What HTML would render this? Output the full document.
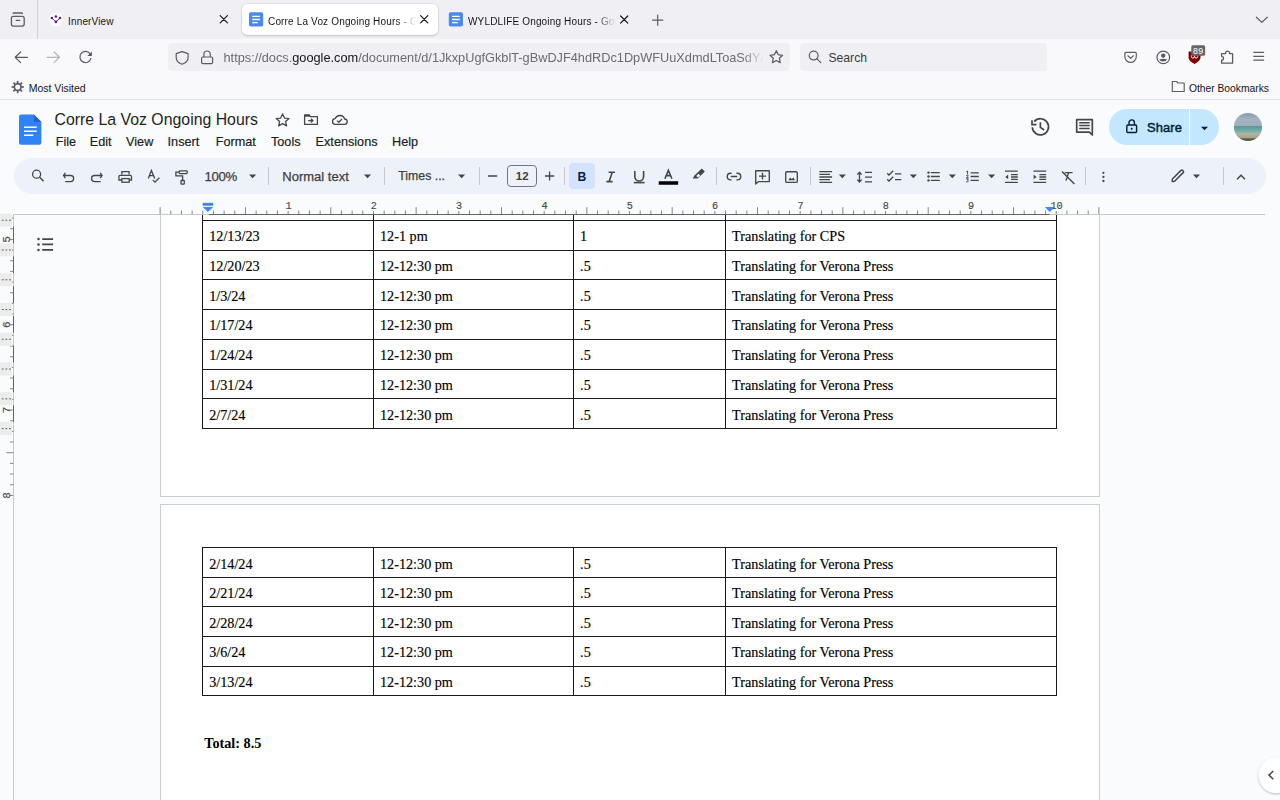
<!DOCTYPE html><html><head><meta charset="utf-8"><title>Corre La Voz Ongoing Hours</title><style>
*{box-sizing:border-box;margin:0;padding:0}
html,body{width:1280px;height:800px;overflow:hidden;background:#f9fbfd;font-family:"Liberation Sans",sans-serif;position:relative}
.a{position:absolute}
.t{position:absolute;white-space:nowrap;line-height:1}
svg{position:absolute;left:0;top:0;overflow:visible}
</style></head><body>
<div class="a" style="left:0.00px;top:0.00px;width:1280.00px;height:39.00px;background:#f0f0f4;"></div>
<div class="a" style="left:37.00px;top:0.00px;width:1.00px;height:39.00px;background:#d0d0d7;"></div>
<div class="a" style="left:242.00px;top:4.00px;width:196.00px;height:31.00px;background:#fff;border-radius:5px;box-shadow:0 0 0 .5px rgba(0,0,0,.10),0 1px 2px rgba(0,0,0,.16)"></div>
<div class="t" style="left:68.00px;top:16.54px;font-size:10.00px;color:#15141a;font-weight:normal;font-family:'Liberation Sans',sans-serif;letter-spacing:0.16px">InnerView</div>
<div class="t" style="left:268.00px;top:16.54px;font-size:10.00px;color:#15141a;font-weight:normal;font-family:'Liberation Sans',sans-serif;letter-spacing:0.16px;width:150px;overflow:hidden;-webkit-mask-image:linear-gradient(90deg,#000 128px,transparent 148px)">Corre La Voz Ongoing Hours - Google Docs</div>
<div class="t" style="left:468.00px;top:16.54px;font-size:10.00px;color:#15141a;font-weight:normal;font-family:'Liberation Sans',sans-serif;letter-spacing:0.16px;width:150px;overflow:hidden;-webkit-mask-image:linear-gradient(90deg,#000 128px,transparent 148px)">WYLDLIFE Ongoing Hours - Google Docs</div>
<div class="a" style="left:0.00px;top:39.00px;width:1280.00px;height:36.00px;background:#f9f9fb;"></div>
<div class="a" style="left:168.00px;top:43.00px;width:622.00px;height:28.00px;background:#f0f0f4;border-radius:4px"></div>
<div class="t" style="left:223.50px;top:52.21px;font-size:12.75px;color:#6a6a73;font-weight:normal;font-family:'Liberation Sans',sans-serif;width:540px;overflow:hidden;-webkit-mask-image:linear-gradient(90deg,#000 518px,transparent 540px)">https://docs.<span style="color:#15141a">google.com</span>/document/d/1JkxpUgfGkblT-gBwDJF4hdRDc1DpWFUuXdmdLToaSdY/edit</div>
<div class="a" style="left:800.00px;top:43.00px;width:247.00px;height:28.00px;background:#f0f0f4;border-radius:4px"></div>
<div class="t" style="left:828.40px;top:51.57px;font-size:12.20px;color:#3a3944;font-weight:normal;font-family:'Liberation Sans',sans-serif;">Search</div>
<div class="a" style="left:0.00px;top:75.00px;width:1280.00px;height:24.00px;background:#f9f9fb;"></div>
<div class="a" style="left:0.00px;top:99.00px;width:1280.00px;height:1.00px;background:#e0e0e6;"></div>
<div class="t" style="left:28.70px;top:83.11px;font-size:10.50px;color:#15141a;font-weight:normal;font-family:'Liberation Sans',sans-serif;">Most Visited</div>
<div class="t" style="left:1188.90px;top:83.68px;font-size:10.30px;color:#15141a;font-weight:normal;font-family:'Liberation Sans',sans-serif;">Other Bookmarks</div>
<div class="a" style="left:0;top:214px;width:1280px;height:586px;overflow:hidden;background:#f9fbfd">
<div class="a" style="left:160.00px;top:-114.00px;width:940.00px;height:396.70px;background:#fff;border:1px solid #cdcdcd"></div>
<div class="a" style="left:160.00px;top:290.00px;width:940.00px;height:400.00px;background:#fff;border:1px solid #cdcdcd"></div>
<div class="a" style="left:202.10px;top:5.90px;width:855.00px;height:1.00px;background:#1a1a1a;"></div>
<div class="a" style="left:202.10px;top:35.63px;width:855.00px;height:1.00px;background:#1a1a1a;"></div>
<div class="a" style="left:202.10px;top:65.36px;width:855.00px;height:1.00px;background:#1a1a1a;"></div>
<div class="a" style="left:202.10px;top:95.09px;width:855.00px;height:1.00px;background:#1a1a1a;"></div>
<div class="a" style="left:202.10px;top:124.82px;width:855.00px;height:1.00px;background:#1a1a1a;"></div>
<div class="a" style="left:202.10px;top:154.55px;width:855.00px;height:1.00px;background:#1a1a1a;"></div>
<div class="a" style="left:202.10px;top:184.28px;width:855.00px;height:1.00px;background:#1a1a1a;"></div>
<div class="a" style="left:202.10px;top:214.01px;width:855.00px;height:1.00px;background:#1a1a1a;"></div>
<div class="a" style="left:202.10px;top:-0.50px;width:1.00px;height:215.51px;background:#1a1a1a;"></div>
<div class="a" style="left:372.90px;top:-0.50px;width:1.00px;height:215.51px;background:#1a1a1a;"></div>
<div class="a" style="left:573.00px;top:-0.50px;width:1.00px;height:215.51px;background:#1a1a1a;"></div>
<div class="a" style="left:725.00px;top:-0.50px;width:1.00px;height:215.51px;background:#1a1a1a;"></div>
<div class="a" style="left:1056.10px;top:-0.50px;width:1.00px;height:215.51px;background:#1a1a1a;"></div>
<div class="t" style="left:209.20px;top:15.21px;font-size:14.20px;color:#000;font-weight:normal;font-family:'Liberation Serif',serif;-webkit-text-stroke:0.15px #000">12/13/23</div>
<div class="t" style="left:380.00px;top:15.21px;font-size:14.20px;color:#000;font-weight:normal;font-family:'Liberation Serif',serif;-webkit-text-stroke:0.15px #000">12-1 pm</div>
<div class="t" style="left:580.10px;top:15.21px;font-size:14.20px;color:#000;font-weight:normal;font-family:'Liberation Serif',serif;-webkit-text-stroke:0.15px #000">1</div>
<div class="t" style="left:732.10px;top:15.21px;font-size:14.20px;color:#000;font-weight:normal;font-family:'Liberation Serif',serif;-webkit-text-stroke:0.15px #000">Translating for CPS</div>
<div class="t" style="left:209.20px;top:44.94px;font-size:14.20px;color:#000;font-weight:normal;font-family:'Liberation Serif',serif;-webkit-text-stroke:0.15px #000">12/20/23</div>
<div class="t" style="left:380.00px;top:44.94px;font-size:14.20px;color:#000;font-weight:normal;font-family:'Liberation Serif',serif;-webkit-text-stroke:0.15px #000">12-12:30 pm</div>
<div class="t" style="left:580.10px;top:44.94px;font-size:14.20px;color:#000;font-weight:normal;font-family:'Liberation Serif',serif;-webkit-text-stroke:0.15px #000">.5</div>
<div class="t" style="left:732.10px;top:44.94px;font-size:14.20px;color:#000;font-weight:normal;font-family:'Liberation Serif',serif;-webkit-text-stroke:0.15px #000">Translating for Verona Press</div>
<div class="t" style="left:209.20px;top:74.67px;font-size:14.20px;color:#000;font-weight:normal;font-family:'Liberation Serif',serif;-webkit-text-stroke:0.15px #000">1/3/24</div>
<div class="t" style="left:380.00px;top:74.67px;font-size:14.20px;color:#000;font-weight:normal;font-family:'Liberation Serif',serif;-webkit-text-stroke:0.15px #000">12-12:30 pm</div>
<div class="t" style="left:580.10px;top:74.67px;font-size:14.20px;color:#000;font-weight:normal;font-family:'Liberation Serif',serif;-webkit-text-stroke:0.15px #000">.5</div>
<div class="t" style="left:732.10px;top:74.67px;font-size:14.20px;color:#000;font-weight:normal;font-family:'Liberation Serif',serif;-webkit-text-stroke:0.15px #000">Translating for Verona Press</div>
<div class="t" style="left:209.20px;top:104.40px;font-size:14.20px;color:#000;font-weight:normal;font-family:'Liberation Serif',serif;-webkit-text-stroke:0.15px #000">1/17/24</div>
<div class="t" style="left:380.00px;top:104.40px;font-size:14.20px;color:#000;font-weight:normal;font-family:'Liberation Serif',serif;-webkit-text-stroke:0.15px #000">12-12:30 pm</div>
<div class="t" style="left:580.10px;top:104.40px;font-size:14.20px;color:#000;font-weight:normal;font-family:'Liberation Serif',serif;-webkit-text-stroke:0.15px #000">.5</div>
<div class="t" style="left:732.10px;top:104.40px;font-size:14.20px;color:#000;font-weight:normal;font-family:'Liberation Serif',serif;-webkit-text-stroke:0.15px #000">Translating for Verona Press</div>
<div class="t" style="left:209.20px;top:134.13px;font-size:14.20px;color:#000;font-weight:normal;font-family:'Liberation Serif',serif;-webkit-text-stroke:0.15px #000">1/24/24</div>
<div class="t" style="left:380.00px;top:134.13px;font-size:14.20px;color:#000;font-weight:normal;font-family:'Liberation Serif',serif;-webkit-text-stroke:0.15px #000">12-12:30 pm</div>
<div class="t" style="left:580.10px;top:134.13px;font-size:14.20px;color:#000;font-weight:normal;font-family:'Liberation Serif',serif;-webkit-text-stroke:0.15px #000">.5</div>
<div class="t" style="left:732.10px;top:134.13px;font-size:14.20px;color:#000;font-weight:normal;font-family:'Liberation Serif',serif;-webkit-text-stroke:0.15px #000">Translating for Verona Press</div>
<div class="t" style="left:209.20px;top:163.86px;font-size:14.20px;color:#000;font-weight:normal;font-family:'Liberation Serif',serif;-webkit-text-stroke:0.15px #000">1/31/24</div>
<div class="t" style="left:380.00px;top:163.86px;font-size:14.20px;color:#000;font-weight:normal;font-family:'Liberation Serif',serif;-webkit-text-stroke:0.15px #000">12-12:30 pm</div>
<div class="t" style="left:580.10px;top:163.86px;font-size:14.20px;color:#000;font-weight:normal;font-family:'Liberation Serif',serif;-webkit-text-stroke:0.15px #000">.5</div>
<div class="t" style="left:732.10px;top:163.86px;font-size:14.20px;color:#000;font-weight:normal;font-family:'Liberation Serif',serif;-webkit-text-stroke:0.15px #000">Translating for Verona Press</div>
<div class="t" style="left:209.20px;top:193.59px;font-size:14.20px;color:#000;font-weight:normal;font-family:'Liberation Serif',serif;-webkit-text-stroke:0.15px #000">2/7/24</div>
<div class="t" style="left:380.00px;top:193.59px;font-size:14.20px;color:#000;font-weight:normal;font-family:'Liberation Serif',serif;-webkit-text-stroke:0.15px #000">12-12:30 pm</div>
<div class="t" style="left:580.10px;top:193.59px;font-size:14.20px;color:#000;font-weight:normal;font-family:'Liberation Serif',serif;-webkit-text-stroke:0.15px #000">.5</div>
<div class="t" style="left:732.10px;top:193.59px;font-size:14.20px;color:#000;font-weight:normal;font-family:'Liberation Serif',serif;-webkit-text-stroke:0.15px #000">Translating for Verona Press</div>
<div class="a" style="left:202.10px;top:333.20px;width:855.00px;height:1.00px;background:#1a1a1a;"></div>
<div class="a" style="left:202.10px;top:362.80px;width:855.00px;height:1.00px;background:#1a1a1a;"></div>
<div class="a" style="left:202.10px;top:392.40px;width:855.00px;height:1.00px;background:#1a1a1a;"></div>
<div class="a" style="left:202.10px;top:422.00px;width:855.00px;height:1.00px;background:#1a1a1a;"></div>
<div class="a" style="left:202.10px;top:451.60px;width:855.00px;height:1.00px;background:#1a1a1a;"></div>
<div class="a" style="left:202.10px;top:481.20px;width:855.00px;height:1.00px;background:#1a1a1a;"></div>
<div class="a" style="left:202.10px;top:333.20px;width:1.00px;height:149.00px;background:#1a1a1a;"></div>
<div class="a" style="left:372.90px;top:333.20px;width:1.00px;height:149.00px;background:#1a1a1a;"></div>
<div class="a" style="left:573.00px;top:333.20px;width:1.00px;height:149.00px;background:#1a1a1a;"></div>
<div class="a" style="left:725.00px;top:333.20px;width:1.00px;height:149.00px;background:#1a1a1a;"></div>
<div class="a" style="left:1056.10px;top:333.20px;width:1.00px;height:149.00px;background:#1a1a1a;"></div>
<div class="t" style="left:209.20px;top:342.51px;font-size:14.20px;color:#000;font-weight:normal;font-family:'Liberation Serif',serif;-webkit-text-stroke:0.15px #000">2/14/24</div>
<div class="t" style="left:380.00px;top:342.51px;font-size:14.20px;color:#000;font-weight:normal;font-family:'Liberation Serif',serif;-webkit-text-stroke:0.15px #000">12-12:30 pm</div>
<div class="t" style="left:580.10px;top:342.51px;font-size:14.20px;color:#000;font-weight:normal;font-family:'Liberation Serif',serif;-webkit-text-stroke:0.15px #000">.5</div>
<div class="t" style="left:732.10px;top:342.51px;font-size:14.20px;color:#000;font-weight:normal;font-family:'Liberation Serif',serif;-webkit-text-stroke:0.15px #000">Translating for Verona Press</div>
<div class="t" style="left:209.20px;top:372.11px;font-size:14.20px;color:#000;font-weight:normal;font-family:'Liberation Serif',serif;-webkit-text-stroke:0.15px #000">2/21/24</div>
<div class="t" style="left:380.00px;top:372.11px;font-size:14.20px;color:#000;font-weight:normal;font-family:'Liberation Serif',serif;-webkit-text-stroke:0.15px #000">12-12:30 pm</div>
<div class="t" style="left:580.10px;top:372.11px;font-size:14.20px;color:#000;font-weight:normal;font-family:'Liberation Serif',serif;-webkit-text-stroke:0.15px #000">.5</div>
<div class="t" style="left:732.10px;top:372.11px;font-size:14.20px;color:#000;font-weight:normal;font-family:'Liberation Serif',serif;-webkit-text-stroke:0.15px #000">Translating for Verona Press</div>
<div class="t" style="left:209.20px;top:401.71px;font-size:14.20px;color:#000;font-weight:normal;font-family:'Liberation Serif',serif;-webkit-text-stroke:0.15px #000">2/28/24</div>
<div class="t" style="left:380.00px;top:401.71px;font-size:14.20px;color:#000;font-weight:normal;font-family:'Liberation Serif',serif;-webkit-text-stroke:0.15px #000">12-12:30 pm</div>
<div class="t" style="left:580.10px;top:401.71px;font-size:14.20px;color:#000;font-weight:normal;font-family:'Liberation Serif',serif;-webkit-text-stroke:0.15px #000">.5</div>
<div class="t" style="left:732.10px;top:401.71px;font-size:14.20px;color:#000;font-weight:normal;font-family:'Liberation Serif',serif;-webkit-text-stroke:0.15px #000">Translating for Verona Press</div>
<div class="t" style="left:209.20px;top:431.31px;font-size:14.20px;color:#000;font-weight:normal;font-family:'Liberation Serif',serif;-webkit-text-stroke:0.15px #000">3/6/24</div>
<div class="t" style="left:380.00px;top:431.31px;font-size:14.20px;color:#000;font-weight:normal;font-family:'Liberation Serif',serif;-webkit-text-stroke:0.15px #000">12-12:30 pm</div>
<div class="t" style="left:580.10px;top:431.31px;font-size:14.20px;color:#000;font-weight:normal;font-family:'Liberation Serif',serif;-webkit-text-stroke:0.15px #000">.5</div>
<div class="t" style="left:732.10px;top:431.31px;font-size:14.20px;color:#000;font-weight:normal;font-family:'Liberation Serif',serif;-webkit-text-stroke:0.15px #000">Translating for Verona Press</div>
<div class="t" style="left:209.20px;top:460.91px;font-size:14.20px;color:#000;font-weight:normal;font-family:'Liberation Serif',serif;-webkit-text-stroke:0.15px #000">3/13/24</div>
<div class="t" style="left:380.00px;top:460.91px;font-size:14.20px;color:#000;font-weight:normal;font-family:'Liberation Serif',serif;-webkit-text-stroke:0.15px #000">12-12:30 pm</div>
<div class="t" style="left:580.10px;top:460.91px;font-size:14.20px;color:#000;font-weight:normal;font-family:'Liberation Serif',serif;-webkit-text-stroke:0.15px #000">.5</div>
<div class="t" style="left:732.10px;top:460.91px;font-size:14.20px;color:#000;font-weight:normal;font-family:'Liberation Serif',serif;-webkit-text-stroke:0.15px #000">Translating for Verona Press</div>
<div class="t" style="left:204.30px;top:521.61px;font-size:14.20px;color:#000;font-weight:bold;font-family:'Liberation Serif',serif;">Total: 8.5</div>
</div>
<div class="t" style="left:54.50px;top:111.98px;font-size:15.85px;color:#1f1f1f;font-weight:normal;font-family:'Liberation Sans',sans-serif;">Corre La Voz Ongoing Hours</div>
<div class="t" style="left:55.70px;top:135.97px;font-size:12.67px;color:#1f1f1f;font-weight:normal;font-family:'Liberation Sans',sans-serif;-webkit-text-stroke:0.2px #1f1f1f">File</div>
<div class="t" style="left:89.70px;top:135.97px;font-size:12.67px;color:#1f1f1f;font-weight:normal;font-family:'Liberation Sans',sans-serif;-webkit-text-stroke:0.2px #1f1f1f">Edit</div>
<div class="t" style="left:126.10px;top:135.97px;font-size:12.67px;color:#1f1f1f;font-weight:normal;font-family:'Liberation Sans',sans-serif;-webkit-text-stroke:0.2px #1f1f1f">View</div>
<div class="t" style="left:167.60px;top:135.97px;font-size:12.67px;color:#1f1f1f;font-weight:normal;font-family:'Liberation Sans',sans-serif;-webkit-text-stroke:0.2px #1f1f1f">Insert</div>
<div class="t" style="left:215.70px;top:135.97px;font-size:12.67px;color:#1f1f1f;font-weight:normal;font-family:'Liberation Sans',sans-serif;-webkit-text-stroke:0.2px #1f1f1f">Format</div>
<div class="t" style="left:271.00px;top:135.97px;font-size:12.67px;color:#1f1f1f;font-weight:normal;font-family:'Liberation Sans',sans-serif;-webkit-text-stroke:0.2px #1f1f1f">Tools</div>
<div class="t" style="left:315.60px;top:135.97px;font-size:12.67px;color:#1f1f1f;font-weight:normal;font-family:'Liberation Sans',sans-serif;-webkit-text-stroke:0.2px #1f1f1f">Extensions</div>
<div class="t" style="left:392.00px;top:135.97px;font-size:12.67px;color:#1f1f1f;font-weight:normal;font-family:'Liberation Sans',sans-serif;-webkit-text-stroke:0.2px #1f1f1f">Help</div>
<div class="a" style="left:14.00px;top:158.00px;width:1251.50px;height:36.00px;background:#edf2fa;border-radius:18px"></div>
<div class="a" style="left:1109.00px;top:109.00px;width:110.40px;height:36.00px;background:#c2e7ff;border-radius:18px"></div>
<div class="a" style="left:1189.00px;top:109.00px;width:1.00px;height:36.00px;background:#f9fbfd;"></div>
<div class="t" style="left:1147.00px;top:121.58px;font-size:12.90px;color:#001d35;font-weight:normal;font-family:'Liberation Sans',sans-serif;-webkit-text-stroke:0.45px #001d35;letter-spacing:0.1px">Share</div>
<div class="t" style="left:204.60px;top:170.23px;font-size:13.20px;color:#3c3f41;font-weight:normal;font-family:'Liberation Sans',sans-serif;letter-spacing:-0.4px;-webkit-text-stroke:0.25px #3c3f41">100%</div>
<div class="t" style="left:282.30px;top:169.50px;font-size:13.00px;color:#3c3f41;font-weight:normal;font-family:'Liberation Sans',sans-serif;-webkit-text-stroke:0.25px #3c3f41">Normal text</div>
<div class="t" style="left:398.30px;top:170.19px;font-size:12.30px;color:#3c3f41;font-weight:normal;font-family:'Liberation Sans',sans-serif;-webkit-text-stroke:0.25px #3c3f41">Times ...</div>
<div class="a" style="left:569.00px;top:162.75px;width:26.40px;height:26.00px;background:#d3e3fd;border-radius:4px"></div>
<div class="a" style="left:506.90px;top:165.30px;width:30.00px;height:21.30px;background:transparent;border:1px solid #747775;border-radius:4px"></div>
<div class="t" style="left:515.80px;top:170.75px;font-size:11.40px;color:#3c3f41;font-weight:bold;font-family:'Liberation Sans',sans-serif;">12</div>
<div class="a" style="left:267.50px;top:167.00px;width:1.00px;height:17.50px;background:#c7c7c7;"></div>
<div class="a" style="left:384.10px;top:167.00px;width:1.00px;height:17.50px;background:#c7c7c7;"></div>
<div class="a" style="left:478.50px;top:167.00px;width:1.00px;height:17.50px;background:#c7c7c7;"></div>
<div class="a" style="left:564.00px;top:167.00px;width:1.00px;height:17.50px;background:#c7c7c7;"></div>
<div class="a" style="left:716.10px;top:167.00px;width:1.00px;height:17.50px;background:#c7c7c7;"></div>
<div class="a" style="left:809.75px;top:167.00px;width:1.00px;height:17.50px;background:#c7c7c7;"></div>
<div class="a" style="left:1084.90px;top:167.00px;width:1.00px;height:17.50px;background:#c7c7c7;"></div>
<div class="a" style="left:1223.00px;top:167.00px;width:1.00px;height:17.50px;background:#c7c7c7;"></div>
<svg width="1280" height="800" viewBox="0 0 1280 800" style="pointer-events:none">
<rect x="13.5" y="214" width="1251.5" height="1" fill="#c7c7c7"/>
<rect x="209.1" y="214" width="840.6" height="1" fill="#5f6368"/>
<rect x="159.63" y="207.2" width="1" height="6.8" fill="#80868b"/>
<rect x="170.30" y="210.6" width="1" height="3.4" fill="#80868b"/>
<rect x="180.97" y="210.6" width="1" height="3.4" fill="#80868b"/>
<rect x="191.63" y="210.6" width="1" height="3.4" fill="#80868b"/>
<rect x="202.30" y="210.6" width="1" height="3.4" fill="#80868b"/>
<rect x="212.97" y="210.6" width="1" height="3.4" fill="#80868b"/>
<rect x="223.64" y="210.6" width="1" height="3.4" fill="#80868b"/>
<rect x="234.30" y="210.6" width="1" height="3.4" fill="#80868b"/>
<rect x="244.97" y="207.2" width="1" height="6.8" fill="#80868b"/>
<rect x="255.64" y="210.6" width="1" height="3.4" fill="#80868b"/>
<rect x="266.31" y="210.6" width="1" height="3.4" fill="#80868b"/>
<rect x="276.97" y="210.6" width="1" height="3.4" fill="#80868b"/>
<rect x="287.64" y="211" width="1" height="3" fill="#80868b"/>
<text x="288.44" y="209" font-family="Liberation Mono" font-size="10.2" fill="#45484b" stroke="#45484b" stroke-width="0.15" text-anchor="middle">1</text>
<rect x="298.31" y="210.6" width="1" height="3.4" fill="#80868b"/>
<rect x="308.98" y="210.6" width="1" height="3.4" fill="#80868b"/>
<rect x="319.64" y="210.6" width="1" height="3.4" fill="#80868b"/>
<rect x="330.31" y="207.2" width="1" height="6.8" fill="#80868b"/>
<rect x="340.98" y="210.6" width="1" height="3.4" fill="#80868b"/>
<rect x="351.64" y="210.6" width="1" height="3.4" fill="#80868b"/>
<rect x="362.31" y="210.6" width="1" height="3.4" fill="#80868b"/>
<rect x="372.98" y="211" width="1" height="3" fill="#80868b"/>
<text x="373.78" y="209" font-family="Liberation Mono" font-size="10.2" fill="#45484b" stroke="#45484b" stroke-width="0.15" text-anchor="middle">2</text>
<rect x="383.65" y="210.6" width="1" height="3.4" fill="#80868b"/>
<rect x="394.32" y="210.6" width="1" height="3.4" fill="#80868b"/>
<rect x="404.98" y="210.6" width="1" height="3.4" fill="#80868b"/>
<rect x="415.65" y="207.2" width="1" height="6.8" fill="#80868b"/>
<rect x="426.32" y="210.6" width="1" height="3.4" fill="#80868b"/>
<rect x="436.99" y="210.6" width="1" height="3.4" fill="#80868b"/>
<rect x="447.65" y="210.6" width="1" height="3.4" fill="#80868b"/>
<rect x="458.32" y="211" width="1" height="3" fill="#80868b"/>
<text x="459.12" y="209" font-family="Liberation Mono" font-size="10.2" fill="#45484b" stroke="#45484b" stroke-width="0.15" text-anchor="middle">3</text>
<rect x="468.99" y="210.6" width="1" height="3.4" fill="#80868b"/>
<rect x="479.66" y="210.6" width="1" height="3.4" fill="#80868b"/>
<rect x="490.32" y="210.6" width="1" height="3.4" fill="#80868b"/>
<rect x="500.99" y="207.2" width="1" height="6.8" fill="#80868b"/>
<rect x="511.66" y="210.6" width="1" height="3.4" fill="#80868b"/>
<rect x="522.33" y="210.6" width="1" height="3.4" fill="#80868b"/>
<rect x="532.99" y="210.6" width="1" height="3.4" fill="#80868b"/>
<rect x="543.66" y="211" width="1" height="3" fill="#80868b"/>
<text x="544.46" y="209" font-family="Liberation Mono" font-size="10.2" fill="#45484b" stroke="#45484b" stroke-width="0.15" text-anchor="middle">4</text>
<rect x="554.33" y="210.6" width="1" height="3.4" fill="#80868b"/>
<rect x="565.00" y="210.6" width="1" height="3.4" fill="#80868b"/>
<rect x="575.66" y="210.6" width="1" height="3.4" fill="#80868b"/>
<rect x="586.33" y="207.2" width="1" height="6.8" fill="#80868b"/>
<rect x="597.00" y="210.6" width="1" height="3.4" fill="#80868b"/>
<rect x="607.66" y="210.6" width="1" height="3.4" fill="#80868b"/>
<rect x="618.33" y="210.6" width="1" height="3.4" fill="#80868b"/>
<rect x="629.00" y="211" width="1" height="3" fill="#80868b"/>
<text x="629.80" y="209" font-family="Liberation Mono" font-size="10.2" fill="#45484b" stroke="#45484b" stroke-width="0.15" text-anchor="middle">5</text>
<rect x="639.67" y="210.6" width="1" height="3.4" fill="#80868b"/>
<rect x="650.34" y="210.6" width="1" height="3.4" fill="#80868b"/>
<rect x="661.00" y="210.6" width="1" height="3.4" fill="#80868b"/>
<rect x="671.67" y="207.2" width="1" height="6.8" fill="#80868b"/>
<rect x="682.34" y="210.6" width="1" height="3.4" fill="#80868b"/>
<rect x="693.01" y="210.6" width="1" height="3.4" fill="#80868b"/>
<rect x="703.67" y="210.6" width="1" height="3.4" fill="#80868b"/>
<rect x="714.34" y="211" width="1" height="3" fill="#80868b"/>
<text x="715.14" y="209" font-family="Liberation Mono" font-size="10.2" fill="#45484b" stroke="#45484b" stroke-width="0.15" text-anchor="middle">6</text>
<rect x="725.01" y="210.6" width="1" height="3.4" fill="#80868b"/>
<rect x="735.67" y="210.6" width="1" height="3.4" fill="#80868b"/>
<rect x="746.34" y="210.6" width="1" height="3.4" fill="#80868b"/>
<rect x="757.01" y="207.2" width="1" height="6.8" fill="#80868b"/>
<rect x="767.68" y="210.6" width="1" height="3.4" fill="#80868b"/>
<rect x="778.35" y="210.6" width="1" height="3.4" fill="#80868b"/>
<rect x="789.01" y="210.6" width="1" height="3.4" fill="#80868b"/>
<rect x="799.68" y="211" width="1" height="3" fill="#80868b"/>
<text x="800.48" y="209" font-family="Liberation Mono" font-size="10.2" fill="#45484b" stroke="#45484b" stroke-width="0.15" text-anchor="middle">7</text>
<rect x="810.35" y="210.6" width="1" height="3.4" fill="#80868b"/>
<rect x="821.02" y="210.6" width="1" height="3.4" fill="#80868b"/>
<rect x="831.68" y="210.6" width="1" height="3.4" fill="#80868b"/>
<rect x="842.35" y="207.2" width="1" height="6.8" fill="#80868b"/>
<rect x="853.02" y="210.6" width="1" height="3.4" fill="#80868b"/>
<rect x="863.68" y="210.6" width="1" height="3.4" fill="#80868b"/>
<rect x="874.35" y="210.6" width="1" height="3.4" fill="#80868b"/>
<rect x="885.02" y="211" width="1" height="3" fill="#80868b"/>
<text x="885.82" y="209" font-family="Liberation Mono" font-size="10.2" fill="#45484b" stroke="#45484b" stroke-width="0.15" text-anchor="middle">8</text>
<rect x="895.69" y="210.6" width="1" height="3.4" fill="#80868b"/>
<rect x="906.36" y="210.6" width="1" height="3.4" fill="#80868b"/>
<rect x="917.02" y="210.6" width="1" height="3.4" fill="#80868b"/>
<rect x="927.69" y="207.2" width="1" height="6.8" fill="#80868b"/>
<rect x="938.36" y="210.6" width="1" height="3.4" fill="#80868b"/>
<rect x="949.03" y="210.6" width="1" height="3.4" fill="#80868b"/>
<rect x="959.69" y="210.6" width="1" height="3.4" fill="#80868b"/>
<rect x="970.36" y="211" width="1" height="3" fill="#80868b"/>
<text x="971.16" y="209" font-family="Liberation Mono" font-size="10.2" fill="#45484b" stroke="#45484b" stroke-width="0.15" text-anchor="middle">9</text>
<rect x="981.03" y="210.6" width="1" height="3.4" fill="#80868b"/>
<rect x="991.69" y="210.6" width="1" height="3.4" fill="#80868b"/>
<rect x="1002.36" y="210.6" width="1" height="3.4" fill="#80868b"/>
<rect x="1013.03" y="207.2" width="1" height="6.8" fill="#80868b"/>
<rect x="1023.70" y="210.6" width="1" height="3.4" fill="#80868b"/>
<rect x="1034.37" y="210.6" width="1" height="3.4" fill="#80868b"/>
<rect x="1045.03" y="210.6" width="1" height="3.4" fill="#80868b"/>
<rect x="1055.70" y="211" width="1" height="3" fill="#80868b"/>
<text x="1056.50" y="209" font-family="Liberation Mono" font-size="10.2" fill="#45484b" stroke="#45484b" stroke-width="0.15" text-anchor="middle">10</text>
<rect x="1066.37" y="210.6" width="1" height="3.4" fill="#80868b"/>
<rect x="1077.04" y="210.6" width="1" height="3.4" fill="#80868b"/>
<rect x="1087.70" y="210.6" width="1" height="3.4" fill="#80868b"/>
<rect x="1098.37" y="207.2" width="1" height="6.8" fill="#80868b"/>
<rect x="202.7" y="202.8" width="10.5" height="3" fill="#4285f4"/>
<path d="M202.7 207 H213.2 L207.95 212 Z" fill="#4285f4"/>
<path d="M1044.8 207 H1054.8 L1049.8 212 Z" fill="#4285f4"/>
<rect x="13" y="214" width="1" height="586" fill="#c7c7c7"/>
<rect x="13" y="226.70" width="1" height="16.76" fill="#5f6368"/>
<rect x="13" y="256.46" width="1" height="16.76" fill="#5f6368"/>
<rect x="13" y="286.22" width="1" height="16.76" fill="#5f6368"/>
<rect x="13" y="315.98" width="1" height="16.76" fill="#5f6368"/>
<rect x="13" y="345.74" width="1" height="16.76" fill="#5f6368"/>
<rect x="13" y="375.50" width="1" height="16.76" fill="#5f6368"/>
<rect x="13" y="405.26" width="1" height="16.74" fill="#5f6368"/>
<rect x="10.1" y="217.54" width="3.3" height="1" fill="#80868b"/>
<rect x="10.1" y="228.21" width="3.3" height="1" fill="#80868b"/>
<rect x="9.4" y="238.88" width="4" height="1" fill="#80868b"/>
<text transform="translate(9.9,239.38) rotate(-90)" font-family="Liberation Mono" font-size="11" fill="#45484b" stroke="#45484b" stroke-width="0.15" text-anchor="middle">5</text>
<rect x="10.1" y="249.55" width="3.3" height="1" fill="#80868b"/>
<rect x="10.1" y="260.21" width="3.3" height="1" fill="#80868b"/>
<rect x="10.1" y="270.88" width="3.3" height="1" fill="#80868b"/>
<rect x="6.4" y="281.55" width="7" height="1" fill="#80868b"/>
<rect x="10.1" y="292.22" width="3.3" height="1" fill="#80868b"/>
<rect x="10.1" y="302.88" width="3.3" height="1" fill="#80868b"/>
<rect x="10.1" y="313.55" width="3.3" height="1" fill="#80868b"/>
<rect x="9.4" y="324.22" width="4" height="1" fill="#80868b"/>
<text transform="translate(9.9,324.72) rotate(-90)" font-family="Liberation Mono" font-size="11" fill="#45484b" stroke="#45484b" stroke-width="0.15" text-anchor="middle">6</text>
<rect x="10.1" y="334.89" width="3.3" height="1" fill="#80868b"/>
<rect x="10.1" y="345.55" width="3.3" height="1" fill="#80868b"/>
<rect x="10.1" y="356.22" width="3.3" height="1" fill="#80868b"/>
<rect x="6.4" y="366.89" width="7" height="1" fill="#80868b"/>
<rect x="10.1" y="377.56" width="3.3" height="1" fill="#80868b"/>
<rect x="10.1" y="388.23" width="3.3" height="1" fill="#80868b"/>
<rect x="10.1" y="398.89" width="3.3" height="1" fill="#80868b"/>
<rect x="9.4" y="409.56" width="4" height="1" fill="#80868b"/>
<text transform="translate(9.9,410.06) rotate(-90)" font-family="Liberation Mono" font-size="11" fill="#45484b" stroke="#45484b" stroke-width="0.15" text-anchor="middle">7</text>
<rect x="10.1" y="420.23" width="3.3" height="1" fill="#80868b"/>
<rect x="10.1" y="430.89" width="3.3" height="1" fill="#80868b"/>
<rect x="10.1" y="441.56" width="3.3" height="1" fill="#80868b"/>
<rect x="6.4" y="452.23" width="7" height="1" fill="#80868b"/>
<rect x="10.1" y="462.90" width="3.3" height="1" fill="#80868b"/>
<rect x="10.1" y="473.56" width="3.3" height="1" fill="#80868b"/>
<rect x="10.1" y="484.23" width="3.3" height="1" fill="#80868b"/>
<rect x="9.4" y="494.90" width="4" height="1" fill="#80868b"/>
<text transform="translate(9.9,495.40) rotate(-90)" font-family="Liberation Mono" font-size="11" fill="#45484b" stroke="#45484b" stroke-width="0.15" text-anchor="middle">8</text>
<rect x="0" y="213.70" width="12" height="13" fill="#ececec"/>
<rect x="1.80" y="219.70" width="1.9" height="1.1" fill="#707070"/>
<rect x="5.40" y="219.70" width="1.9" height="1.1" fill="#707070"/>
<rect x="9.00" y="219.70" width="1.9" height="1.1" fill="#707070"/>
<rect x="0" y="243.46" width="12" height="13" fill="#ececec"/>
<rect x="1.80" y="249.46" width="1.9" height="1.1" fill="#707070"/>
<rect x="5.40" y="249.46" width="1.9" height="1.1" fill="#707070"/>
<rect x="9.00" y="249.46" width="1.9" height="1.1" fill="#707070"/>
<rect x="0" y="273.22" width="12" height="13" fill="#ececec"/>
<rect x="1.80" y="279.22" width="1.9" height="1.1" fill="#707070"/>
<rect x="5.40" y="279.22" width="1.9" height="1.1" fill="#707070"/>
<rect x="9.00" y="279.22" width="1.9" height="1.1" fill="#707070"/>
<rect x="0" y="302.98" width="12" height="13" fill="#ececec"/>
<rect x="1.80" y="308.98" width="1.9" height="1.1" fill="#707070"/>
<rect x="5.40" y="308.98" width="1.9" height="1.1" fill="#707070"/>
<rect x="9.00" y="308.98" width="1.9" height="1.1" fill="#707070"/>
<rect x="0" y="332.74" width="12" height="13" fill="#ececec"/>
<rect x="1.80" y="338.74" width="1.9" height="1.1" fill="#707070"/>
<rect x="5.40" y="338.74" width="1.9" height="1.1" fill="#707070"/>
<rect x="9.00" y="338.74" width="1.9" height="1.1" fill="#707070"/>
<rect x="0" y="362.50" width="12" height="13" fill="#ececec"/>
<rect x="1.80" y="368.50" width="1.9" height="1.1" fill="#707070"/>
<rect x="5.40" y="368.50" width="1.9" height="1.1" fill="#707070"/>
<rect x="9.00" y="368.50" width="1.9" height="1.1" fill="#707070"/>
<rect x="0" y="392.26" width="12" height="13" fill="#ececec"/>
<rect x="1.80" y="398.26" width="1.9" height="1.1" fill="#707070"/>
<rect x="5.40" y="398.26" width="1.9" height="1.1" fill="#707070"/>
<rect x="9.00" y="398.26" width="1.9" height="1.1" fill="#707070"/>
<rect x="0" y="422.02" width="12" height="13" fill="#ececec"/>
<rect x="1.80" y="428.02" width="1.9" height="1.1" fill="#707070"/>
<rect x="5.40" y="428.02" width="1.9" height="1.1" fill="#707070"/>
<rect x="9.00" y="428.02" width="1.9" height="1.1" fill="#707070"/>
<g fill="#444746"><circle cx="38.5" cy="239.1" r="1.25"/><circle cx="38.5" cy="244.4" r="1.25"/><circle cx="38.5" cy="249.9" r="1.25"/></g>
<g stroke="#444746" stroke-width="1.6"><path d="M42.2 239.1 H53.1 M42.2 244.4 H53.1 M42.2 249.9 H53.1"/></g>
<defs><filter id="sh" x="-50%" y="-50%" width="200%" height="200%"><feDropShadow dx="0" dy="1" stdDeviation="1.2" flood-color="#000" flood-opacity="0.28"/></filter></defs>
<circle cx="1276.5" cy="775.3" r="17.8" fill="#fff" filter="url(#sh)"/>
<path d="M1273.3 771 L1268.9 775.1 L1273.3 779.2" fill="none" stroke="#444746" stroke-width="1.5"/>
</svg>
<svg width="1280" height="800" viewBox="0 0 1280 800" style="pointer-events:none">
<g fill="none" stroke="#5b5b66" stroke-width="1.3" stroke-linecap="round">
<rect x="11.4" y="16.3" width="12.8" height="9.8" rx="2"/>
<path d="M13.2 13.4 Q13.2 13 13.8 13 H21.8 Q22.4 13 22.4 13.4"/>
<path d="M16.2 20.3 H19.7"/>
</g>
<circle cx="55.9" cy="19.4" r="6.9" fill="#fff"/>
<g stroke="#5a1b8c" stroke-width="0.9" fill="none"><path d="M51.9 18.1 L55.9 21.9 L60 18.1"/></g>
<g fill="#5a1b8c"><circle cx="51.9" cy="18.1" r="1.25"/><circle cx="55.9" cy="16.6" r="1.25"/><circle cx="60" cy="18.1" r="1.25"/><circle cx="55.9" cy="21.9" r="1.35"/></g>
<g stroke="#15141a" stroke-width="1.2" stroke-linecap="round"><path d="M220.2 15.6 L227.4 22.8 M227.4 15.6 L220.2 22.8"/><path d="M420.6 15.6 L427.8 22.8 M427.8 15.6 L420.6 22.8"/><path d="M620.6 16 L627.8 23.2 M627.8 16 L620.6 23.2"/></g>
<rect x="249.0" y="12.2" width="14.2" height="14.4" rx="1.8" fill="#4a89f3"/>
<g stroke="#fff" stroke-width="1.3"><path d="M252.3 16.4 H259.9 M252.3 19.5 H259.9 M252.3 22.6 H257.8"/></g>
<rect x="448.8" y="12.2" width="14.2" height="14.4" rx="1.8" fill="#4a89f3"/>
<g stroke="#fff" stroke-width="1.3"><path d="M452.1 16.4 H459.7 M452.1 19.5 H459.7 M452.1 22.6 H457.6"/></g>
<g stroke="#5b5b66" stroke-width="1.2" stroke-linecap="round"><path d="M652.6 20.2 H662.8 M657.7 15.1 V25.3"/></g>
<g stroke="#5b5b66" stroke-width="1.2" fill="none" stroke-linecap="round" stroke-linejoin="round"><path d="M1256.4 17.2 L1261.8 22.4 L1267.2 17.2"/></g>
<g stroke="#5b5b66" stroke-width="1.25" fill="none" stroke-linecap="round" stroke-linejoin="round"><path d="M15.2 57.3 H27.4 M20.6 52 L15.2 57.3 L20.6 62.6"/></g>
<g stroke="#b6b6bd" stroke-width="1.25" fill="none" stroke-linecap="round" stroke-linejoin="round"><path d="M47.2 57.3 H59.5 M54.1 52 L59.5 57.3 L54.1 62.6"/></g>
<g stroke="#5b5b66" stroke-width="1.25" fill="none"><path d="M90.3 54 A5.6 5.6 0 1 0 91 58"/></g>
<path d="M87.3 56.1 L91.9 56.1 L91.9 51.5 Z" fill="#5b5b66"/>
<g stroke="#5b5b66" stroke-width="1.2" fill="none" stroke-linejoin="round"><path d="M182.1 51.6 L176.2 53.6 V57.5 C176.2 60.8 178.8 63.1 182.1 64.2 C185.4 63.1 188.1 60.8 188.1 57.5 V53.6 Z"/></g>
<g stroke="#5b5b66" stroke-width="1.2" fill="none"><rect x="201.6" y="57" width="11" height="6.6" rx="1.2"/><path d="M203.9 57 V54.2 A3.2 3.2 0 0 1 210.3 54.2 V57"/></g>
<path transform="translate(769.2,50) scale(0.62)" fill="none" stroke="#5b5b66" stroke-width="2" stroke-linejoin="round" d="M11.5 1.2 L14.6 7.6 L21.6 8.5 L16.5 13.3 L17.8 20.3 L11.5 16.9 L5.2 20.3 L6.5 13.3 L1.4 8.5 L8.4 7.6 Z"/>
<g stroke="#5b5b66" stroke-width="1.25" fill="none" stroke-linecap="round"><circle cx="813.7" cy="55.6" r="4.4"/><path d="M817 58.9 L820.8 62.6"/></g>
<g stroke="#5b5b66" stroke-width="1.2" fill="none" stroke-linecap="round" stroke-linejoin="round"><path d="M1126 52.3 H1135.3 Q1136.3 52.3 1136.3 53.3 V56.4 C1136.3 59.9 1133.5 62.4 1130.6 62.4 C1127.7 62.4 1124.9 59.9 1124.9 56.4 V53.3 Q1124.9 52.3 1126 52.3 Z"/><path d="M1127.9 55.8 L1130.6 58.4 L1133.3 55.8"/></g>
<g stroke="#5b5b66" stroke-width="1.2" fill="none"><circle cx="1163.3" cy="57.4" r="6.3"/></g>
<circle cx="1163.2" cy="55.6" r="2.2" fill="#5b5b66"/>
<path d="M1159.2 59.2 Q1163.2 58.3 1167.2 59.2 Q1166.2 61.5 1163.2 61.6 Q1160.2 61.5 1159.2 59.2 Z" fill="#5b5b66"/>
<path d="M1188.6 51.4 H1200.5 V57.2 C1200.5 59.8 1198 62.2 1194.55 63.9 C1191.1 62.2 1188.6 59.8 1188.6 57.2 Z" fill="#800000"/>
<path d="M1191.4 55.4 V56.6 A1.5 1.5 0 0 0 1194.4 56.6 V55.4 M1194.6 55.4 V56.6 A1.5 1.5 0 0 0 1197.6 56.6 V55.4" fill="none" stroke="#fff" stroke-width="0.9"/>
<rect x="1191.25" y="45.3" width="13.9" height="10.5" rx="1.6" fill="#666"/>
<text x="1198.2" y="53.6" font-family="Liberation Sans" font-size="8.8" fill="#fff" text-anchor="middle" letter-spacing="0.4">89</text>
<path d="M1221.6 63.2 H1232.6 V53.6 H1229.5 A2 2 0 1 0 1225.6 53.6 H1221.6 V56.3 A1.9 1.9 0 1 1 1221.6 60.1 Z" fill="none" stroke="#5b5b66" stroke-width="1.3" stroke-linejoin="round"/>
<g stroke="#5b5b66" stroke-width="1.25" stroke-linecap="round"><path d="M1253.8 52.3 H1263.6 M1253.8 56.3 H1263.6 M1253.8 60.2 H1263.6"/></g>
<g transform="translate(17.7,87)">
<circle r="3.35" fill="none" stroke="#5b5b66" stroke-width="1.6"/>
<rect x="-0.85" y="-6.1" width="1.7" height="3" fill="#5b5b66" transform="rotate(0)"/>
<rect x="-0.85" y="-6.1" width="1.7" height="3" fill="#5b5b66" transform="rotate(45)"/>
<rect x="-0.85" y="-6.1" width="1.7" height="3" fill="#5b5b66" transform="rotate(90)"/>
<rect x="-0.85" y="-6.1" width="1.7" height="3" fill="#5b5b66" transform="rotate(135)"/>
<rect x="-0.85" y="-6.1" width="1.7" height="3" fill="#5b5b66" transform="rotate(180)"/>
<rect x="-0.85" y="-6.1" width="1.7" height="3" fill="#5b5b66" transform="rotate(225)"/>
<rect x="-0.85" y="-6.1" width="1.7" height="3" fill="#5b5b66" transform="rotate(270)"/>
<rect x="-0.85" y="-6.1" width="1.7" height="3" fill="#5b5b66" transform="rotate(315)"/>
</g>
<path d="M1172.3 81.5 H1176.5 L1178 83 H1184.2 V91.5 H1172.3 Z" fill="none" stroke="#5b5b66" stroke-width="1.15" stroke-linejoin="round"/>
<path d="M19 116.6 Q19 114.5 21.1 114.5 H33.9 L41.4 121.9 V142.6 Q41.4 144.8 39.3 144.8 H21.1 Q19 144.8 19 142.6 Z" fill="#3083f4"/>
<path d="M33.9 114.5 L41.4 121.9 H33.9 Z" fill="#1d63d6"/>
<g stroke="#fff" stroke-width="1.5"><path d="M24 127.3 H36.8 M24 131.3 H36.8 M24 135.3 H33.3"/></g>
<path d="M282.6 113.9 L284.5 118.1 L289 118.5 L285.6 121.5 L286.6 125.9 L282.6 123.6 L278.6 125.9 L279.6 121.5 L276.2 118.5 L280.7 118.1 Z" fill="none" stroke="#444746" stroke-width="1.25" stroke-linejoin="round"/>
<path d="M304.6 115.2 H309.2 L310.7 116.7 H317.4 V124.4 H304.6 Z" fill="none" stroke="#444746" stroke-width="1.3" stroke-linejoin="round"/>
<rect x="304" y="114.5" width="6" height="2.2" fill="#444746"/>
<path d="M308.2 120.6 H312.3 M310.9 118.7 L312.9 120.6 L310.9 122.5" fill="none" stroke="#444746" stroke-width="1.3"/>
<path d="M335.6 124.4 H344.4 A2.7 2.7 0 0 0 344.6 119 A5 5 0 0 0 335.2 118.6 A2.9 2.9 0 0 0 335.6 124.4 Z" fill="none" stroke="#444746" stroke-width="1.3" stroke-linejoin="round"/>
<path d="M337 120.6 L338.8 122.3 L342 119" fill="none" stroke="#444746" stroke-width="1.3"/>
<g fill="none" stroke="#444746" stroke-width="1.7">
<path d="M1032.3 127.2 A8.1 8.1 0 1 0 1034.2 121.6"/>
<path d="M1032 120.3 V124.6 H1036.5"/>
<path d="M1040.4 122.3 V127.4 L1044.1 130"/>
</g>
<path d="M1076.7 119.7 H1092.3 V135 L1089.4 132.1 H1076.7 Z" fill="none" stroke="#444746" stroke-width="1.7" stroke-linejoin="round"/>
<g stroke="#444746" stroke-width="1.5"><path d="M1079.2 122.8 H1089.7 M1079.2 125.6 H1089.7 M1079.2 128.4 H1089.7"/></g>
<g fill="none" stroke="#001d35" stroke-width="1.4"><rect x="1126.8" y="125" width="9.8" height="7.5" rx="1"/><path d="M1129 125 V122.6 A2.7 2.7 0 0 1 1134.4 122.6 V125"/></g>
<circle cx="1131.7" cy="128.8" r="1" fill="#001d35"/>
<path d="M1201 126.8 H1208 L1204.5 130.3 Z" fill="#001d35"/>
<defs><clipPath id="av"><circle cx="1248" cy="127" r="14.1"/></clipPath><linearGradient id="sky" x1="0" y1="0" x2="0" y2="1"><stop offset="0" stop-color="#8196aa"/><stop offset="0.5" stop-color="#a3b3c0"/><stop offset="1" stop-color="#9fb0bb"/></linearGradient><linearGradient id="sea" x1="0" y1="0" x2="0" y2="1"><stop offset="0" stop-color="#4f9a98"/><stop offset="1" stop-color="#86b9b0"/></linearGradient><linearGradient id="veg" x1="0" y1="0" x2="0" y2="1"><stop offset="0" stop-color="#b9b3a2"/><stop offset="0.45" stop-color="#a8a48e"/><stop offset="0.6" stop-color="#55613f"/><stop offset="1" stop-color="#3b4a30"/></linearGradient></defs>
<g clip-path="url(#av)"><rect x="1233" y="112" width="30" height="14.2" fill="url(#sky)"/><rect x="1233" y="126" width="30" height="7.2" fill="url(#sea)"/><rect x="1233" y="133" width="30" height="10" fill="url(#veg)"/></g>
<g fill="none" stroke="#444746" stroke-width="1.3" stroke-linecap="butt" stroke-linejoin="miter">
<circle cx="36.6" cy="174.2" r="4"/><path d="M39.6 177.2 L43.6 181.3" stroke-width="1.4"/>
<path d="M65.4 172.9 L63.5 175.5 L65.4 178.1 M63.8 175.5 H70.6 A3.05 3.05 0 0 1 70.6 181.6 H65.2"/>
<path d="M100.2 172.9 L102.1 175.5 L100.2 178.1 M101.8 175.5 H94.6 A3.05 3.05 0 0 0 94.6 181.6 H100.6"/>
<path d="M121.9 174.6 V171.6 H129.1 V174.6"/>
<path d="M121.8 180 H118.9 V176.6 Q118.9 175.4 120.1 175.4 H130.3 Q131.5 175.4 131.5 176.6 V180 H129.2"/>
<rect x="121.9" y="178.6" width="7.3" height="3.6"/>
<path d="M148.3 178.6 L151.4 170.4 L154.7 178.4 M149.6 175.6 H153.3"/>
<path d="M152.8 180.1 L155 182.2 L159.4 177.8"/>
<rect x="179.2" y="170.9" width="8" height="2.7" rx="0.8"/>
<path d="M179.1 172.2 H175.9 V175.8 H182.6 V180.2"/>
<rect x="181" y="180.5" width="3.3" height="3.6" rx="0.6"/>
</g>
<path d="M249.00 174.6 H256.20 L252.60 178.2 Z" fill="#444746"/>
<path d="M363.90 174.6 H371.10 L367.50 178.2 Z" fill="#444746"/>
<path d="M458.00 174.6 H465.20 L461.60 178.2 Z" fill="#444746"/>
<path d="M838.75 174.6 H845.95 L842.35 178.2 Z" fill="#444746"/>
<path d="M909.75 174.6 H916.95 L913.35 178.2 Z" fill="#444746"/>
<path d="M948.75 174.6 H955.95 L952.35 178.2 Z" fill="#444746"/>
<path d="M988.00 174.6 H995.20 L991.60 178.2 Z" fill="#444746"/>
<path d="M1192.90 174.6 H1200.10 L1196.50 178.2 Z" fill="#444746"/>
<g stroke="#444746" stroke-width="1.3"><path d="M488 176 H497.2 M545 176 H554.2 M549.6 171.4 V180.6"/></g>
<text x="577.6" y="180.7" font-family="Liberation Sans" font-weight="bold" font-size="12.2" fill="#041e49">B</text>
<g fill="none" stroke="#444746" stroke-width="1.6"><path d="M608.6 172.2 H615 M606.4 181.6 H612.6 M612.3 172.2 L609.1 181.6"/></g>
<g fill="none" stroke="#444746" stroke-width="1.6"><path d="M634.8 171 V176.6 A4.4 4.4 0 0 0 643.6 176.6 V171"/><path d="M633.8 182.6 H644.6"/></g>
<g fill="none" stroke="#444746" stroke-width="1.6"><path d="M664.9 178.8 L668.4 170.4 L671.9 178.8 M666.2 175.6 H670.6"/></g>
<rect x="658.75" y="181.25" width="19.4" height="3.5" fill="#000"/>
<path fill-rule="evenodd" d="M701.7 168.4 L704.9 171.5 L697.7 178.6 H692.8 L694.2 175.7 Z M696.3 176.1 L698.5 173.8 L700.3 175.4 L697.9 177.6 Z" fill="#444746"/>
<g fill="none" stroke="#444746" stroke-width="1.4"><path d="M731.6 173.2 H730.6 A3.35 3.35 0 0 0 730.6 179.9 H731.6 M736.4 173.2 H737.4 A3.35 3.35 0 0 1 737.4 179.9 H736.4 M730.8 176.55 H737.2"/></g>
<path d="M755.7 170.7 H769.3 V181.6 H758.6 L755.7 184.1 Z" fill="none" stroke="#444746" stroke-width="1.35" stroke-linejoin="round"/>
<path d="M762.5 172.7 V179.6 M759 176.15 H766" stroke="#444746" stroke-width="1.35"/>
<rect x="785.7" y="171.7" width="11.6" height="10.7" rx="1.2" fill="none" stroke="#444746" stroke-width="1.35"/>
<path d="M788.2 180.2 L790.4 177.6 L791.9 179.2 L793.3 177.3 L795 180.2 Z" fill="#444746"/>
<g stroke="#444746" stroke-width="1.3"><path d="M819.4 171.6 H832.1 M819.4 174.3 H829.9 M819.4 177 H832.1 M819.4 179.7 H829.9 M819.4 182.4 H832.1"/></g>
<g stroke="#444746" stroke-width="1.3" fill="none"><path d="M859.5 172.6 V181.6 M857.3 174.6 L859.5 172.2 L861.7 174.6 M857.3 179.6 L859.5 182 L861.7 179.6 M865 172.4 H872 M865 177.1 H872 M865 181.8 H872"/></g>
<g stroke="#444746" stroke-width="1.3" fill="none"><path d="M887.2 173.2 L889 175 L893.2 170.8 M887.2 179.2 L889 181 L893.2 176.8 M895 173.8 H901.3 M895 179.6 H901.3"/></g>
<g fill="#444746"><circle cx="928.5" cy="172.6" r="1.2"/><circle cx="928.5" cy="176.5" r="1.2"/><circle cx="928.5" cy="180.4" r="1.2"/></g>
<g stroke="#444746" stroke-width="1.3"><path d="M930.8 172.6 H939.8 M930.8 176.5 H939.8 M930.8 180.4 H939.8"/></g>
<g fill="none" stroke="#444746" stroke-width="0.95"><path d="M966.4 171.7 L967.6 171 V174.4 M966.2 175.6 Q967.2 174.7 968.2 175.5 Q968.5 176.2 966.3 177.8 H968.6 M966.3 178.9 H968.3 L967.3 180.1 Q968.6 180.3 968.3 181.3 Q967.7 182.2 966.2 181.7"/></g>
<g stroke="#444746" stroke-width="1.3"><path d="M970.6 172.9 H978.8 M970.6 176.5 H978.8 M970.6 180.3 H978.8"/></g>
<g stroke="#444746" stroke-width="1.3"><path d="M1005 171.2 H1017.8 M1011 174.6 H1017.8 M1011 177 H1017.8 M1011 179.4 H1017.8 M1005 182.4 H1017.8"/></g>
<path d="M1008.2 174.6 L1005.2 176.9 L1008.2 179.2 Z" fill="#444746"/>
<g stroke="#444746" stroke-width="1.3"><path d="M1033.4 171.2 H1046.2 M1039.4 174.6 H1046.2 M1039.4 177 H1046.2 M1039.4 179.4 H1046.2 M1033.4 182.4 H1046.2"/></g>
<path d="M1033.6 174.6 L1036.6 176.9 L1033.6 179.2 Z" fill="#444746"/>
<g stroke="#444746" stroke-width="1.4" fill="none"><path d="M1064.8 172.6 H1072.6 M1068.6 172.6 L1066 180.6 M1062 171.6 L1074.4 184"/></g>
<g fill="#444746"><circle cx="1103.4" cy="172.8" r="1.15"/><circle cx="1103.4" cy="176.9" r="1.15"/><circle cx="1103.4" cy="181" r="1.15"/></g>
<path d="M1174.6 181.2 L1172.2 181.4 L1172.4 179 L1181 170.4 A1.1 1.1 0 0 1 1182.6 170.4 L1183.2 171 A1.1 1.1 0 0 1 1183.2 172.6 Z" fill="none" stroke="#444746" stroke-width="1.5" stroke-linejoin="round"/>
<path d="M1237 179.2 L1241 175.2 L1245 179.2" fill="none" stroke="#444746" stroke-width="1.5"/>
</svg>
</body></html>
